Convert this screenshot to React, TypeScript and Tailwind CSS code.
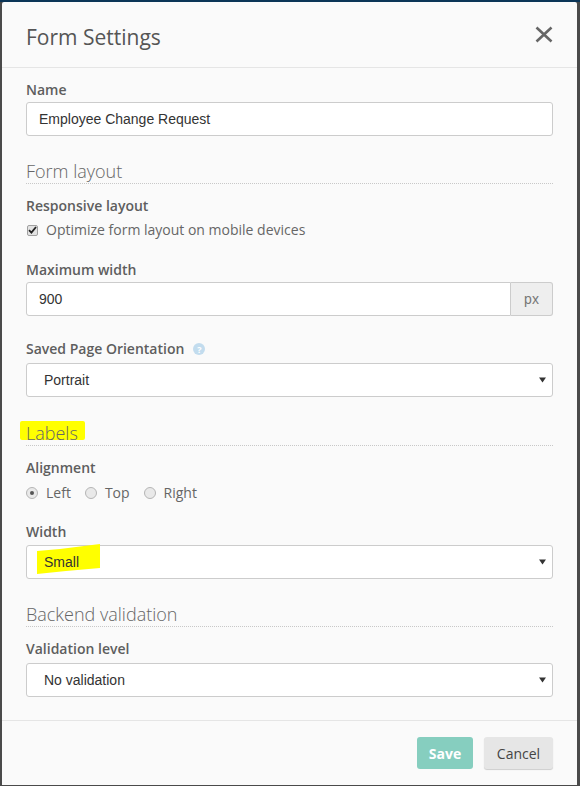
import type { ReactNode } from 'react';

const sans = "font-['Open_Sans',sans-serif]";
const arial = "font-['Liberation_Sans',Arial,sans-serif]";

function FieldLabel({ children, className = '' }: { children: ReactNode; className?: string }) {
  return (
    <div className={`${sans} text-[14px] leading-[20px] font-semibold text-[#5e5e5e] ${className}`}>{children}</div>
  );
}

function SectionHeading({ children, className = '' }: { children: ReactNode; className?: string }) {
  return (
    <div
      className={`${sans} text-[18px] leading-[22px] font-light text-[#666] border-b border-dotted border-[#c8c8c8] pb-px ${className}`}
    >
      {children}
    </div>
  );
}

function Caret() {
  return (
    <svg width="7" height="6" viewBox="0 0 7 6" className="shrink-0">
      <path d="M0 0.5h7L3.5 5.5z" fill="#333" />
    </svg>
  );
}

function FakeSelect({ value, className = '', highlight = false }: { value: string; className?: string; highlight?: boolean }) {
  return (
    <div
      className={`relative h-[34px] flex items-center justify-between pl-[17px] pr-[6px] bg-white border border-[#ccc] rounded-[3px] ${className}`}
    >
      {highlight ? (
        <svg className="absolute left-[9px] top-[-2px]" width="66" height="31" viewBox="0 0 66 31">
          <path d="M1 7 L24 5 L64 0 L64 24 L30 27 L1 30 Z" fill="#ffff00" />
        </svg>
      ) : null}
      <span className={`relative ${arial} text-[14px] text-[#333]`}>{value}</span>
      <Caret />
    </div>
  );
}

function Radio({ checked, label }: { checked?: boolean; label: string }) {
  return (
    <label className="flex items-center gap-[8px]">
      <span className="w-[12px] h-[12px] rounded-full border border-[#b5b5b5] bg-[#e9e9e9] flex items-center justify-center">
        {checked ? <span className="w-[4px] h-[4px] rounded-full bg-[#555]" /> : null}
      </span>
      <span className={`${sans} text-[14px] leading-[20px] text-[#666]`}>{label}</span>
    </label>
  );
}

export default function App() {
  return (
    <div className="h-[786px] bg-[#4a4a4a] border-t-2 border-[#0b3557] overflow-hidden">
      <div className="ml-[2px] mr-[3px] h-[783px] bg-[#fafafa] rounded-t-[2px] flex flex-col">
        <div className="flex justify-between items-start px-6 pt-[21px] pb-[16px] border-b border-[#e5e5e5]">
          <h2 className={`${sans} text-[21px] leading-[28px] text-[#555]`}>Form Settings</h2>
          <svg width="18" height="17" viewBox="0 0 18 17" className="mt-[3px]">
            <path d="M1.5 1.5 L16.5 15.5 M16.5 1.5 L1.5 15.5" stroke="#666" strokeWidth="2.6" />
          </svg>
        </div>

        <div className="px-6 pt-[12px] pb-[23px] flex flex-col">
          <FieldLabel>Name</FieldLabel>
          <div className="mt-[2px] h-[34px] flex items-center px-[12px] bg-white border border-[#ccc] rounded-[3px]">
            <span className={`${arial} text-[14px] text-[#333]`}>Employee Change Request</span>
          </div>

          <SectionHeading className="mt-[24px]">Form layout</SectionHeading>
          <FieldLabel className="mt-[12px]">Responsive layout</FieldLabel>
          <label className="mt-[4px] flex items-center gap-[8px] pl-px">
            <span className="w-[11px] h-[11px] rounded-[2px] border border-[#a0a0a0] bg-[#e3e3e3] flex items-center justify-center">
              <svg width="9" height="8" viewBox="0 0 9 8">
                <path d="M1 4.2 L3.4 6.6 L8 1" stroke="#222" strokeWidth="1.8" fill="none" />
              </svg>
            </span>
            <span className={`${sans} text-[14px] leading-[20px] text-[#666]`}>
              Optimize form layout on mobile devices
            </span>
          </label>

          <FieldLabel className="mt-[20px]">Maximum width</FieldLabel>
          <div className="mt-[2px] h-[34px] flex">
            <div className="flex-1 flex items-center px-[12px] bg-white border border-[#ccc] rounded-l-[3px]">
              <span className={`${arial} text-[14px] text-[#333]`}>900</span>
            </div>
            <div
              className={`w-[42px] flex items-center justify-center bg-[#eee] border border-l-0 border-[#ccc] rounded-r-[3px] ${arial} text-[14px] text-[#777]`}
            >
              px
            </div>
          </div>

          <FieldLabel className="mt-[23px] flex items-center gap-[9px]">
            Saved Page Orientation
            <span className="w-[12px] h-[12px] rounded-full bg-[#c2dcee] flex items-center justify-center text-white text-[9px] leading-none font-bold">
              ?
            </span>
          </FieldLabel>
          <FakeSelect className="mt-[4px]" value="Portrait" />

          <div className="mt-[25px] relative">
            <span className="absolute left-[-6px] top-[-1px] w-[65px] h-[19px] bg-[#ffff00] rounded-[2px]" />
            <SectionHeading className="relative">Labels</SectionHeading>
          </div>
          <FieldLabel className="mt-[12px]">Alignment</FieldLabel>
          <div className="mt-[5px] flex items-center gap-[14px]">
            <Radio checked label="Left" />
            <Radio label="Top" />
            <Radio label="Right" />
          </div>

          <FieldLabel className="mt-[19px]">Width</FieldLabel>
          <FakeSelect className="mt-[3px]" value="Small" highlight />

          <SectionHeading className="mt-[24px]">Backend validation</SectionHeading>
          <FieldLabel className="mt-[12px]">Validation level</FieldLabel>
          <FakeSelect className="mt-[4px]" value="No validation" />
        </div>

        <div className="border-t border-[#e5e5e5] px-6 pt-[16px] flex justify-end gap-[11px]">
          <button
            className={`w-[56px] h-[32px] rounded-[3px] bg-[#86cebf] text-white ${sans} text-[14px] font-bold`}
          >
            Save
          </button>
          <button
            className={`w-[69px] h-[32px] rounded-[3px] bg-[#e6e6e6] text-[#444] ${sans} text-[14px] shadow-[0_1px_1px_rgba(0,0,0,0.18)]`}
          >
            Cancel
          </button>
        </div>
      </div>
    </div>
  );
}
